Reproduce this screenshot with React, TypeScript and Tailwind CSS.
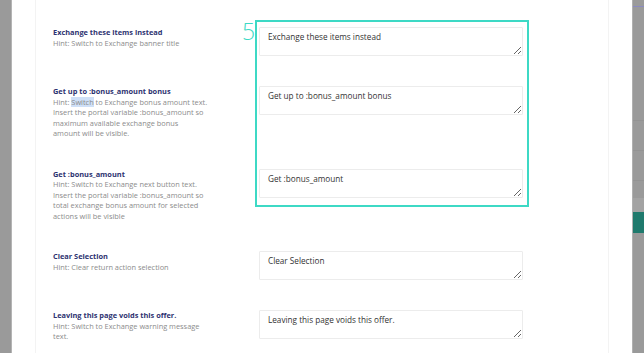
import React from 'react';

type Row = {
  title: string;
  hint: React.ReactNode[];
  value: string;
};

const rows: Row[] = [
  {
    title: 'Exchange these items instead',
    hint: ['Hint: Switch to Exchange banner title'],
    value: 'Exchange these items instead',
  },
  {
    title: 'Get up to :bonus_amount bonus',
    hint: [
      <>
        Hint: <span className="bg-[#cfe0f7]">Switch</span> to Exchange bonus amount text.
      </>,
      'Insert the portal variable :bonus_amount so',
      'maximum available exchange bonus',
      'amount will be visible.',
    ],
    value: 'Get up to :bonus_amount bonus',
  },
  {
    title: 'Get :bonus_amount',
    hint: [
      'Hint: Switch to Exchange next button text.',
      'Insert the portal variable :bonus_amount so',
      'total exchange bonus amount for selected',
      'actions will be visible',
    ],
    value: 'Get :bonus_amount',
  },
  {
    title: 'Clear Selection',
    hint: ['Hint: Clear return action selection'],
    value: 'Clear Selection',
  },
  {
    title: 'Leaving this page voids this offer.',
    hint: ['Hint: Switch to Exchange warning message', 'text.'],
    value: 'Leaving this page voids this offer.',
  },
];

function SettingRow({ row }: { row: Row }) {
  return (
    <div className="flex">
      <div className="w-[206px] shrink-0 text-[7.4px] leading-[10.5px]">
        <div className="font-bold text-[#2d3270] whitespace-nowrap">{row.title}</div>
        {row.hint.map((line, i) => (
          <div key={i} className="text-[#8c8c8c] whitespace-nowrap">
            {line}
          </div>
        ))}
      </div>
      <textarea
        readOnly
        defaultValue={row.value}
        className="w-[264px] h-[29px] border border-[#ececec] rounded-[1px] px-[8px] pt-[3px] text-[8.2px] leading-[11px] text-[#333] outline-none resize-y"
      />
    </div>
  );
}

export default function App() {
  return (
    <div className="w-[644px] h-[353px] flex overflow-hidden bg-[#9a9a9a] font-['Open_Sans',sans-serif]">
      <div className="w-[12px] shrink-0 border-r border-[#b4b4b4]" />
      <div className="w-[620px] shrink-0 bg-white px-[23px]">
        <div className="relative h-full border-x border-[#f3f3f3] pl-[17px] pt-[27px]">
          <div className="flex flex-col gap-[30px]">
            {rows.map((row, i) => (
              <SettingRow key={i} row={row} />
            ))}
          </div>
          <div className="absolute left-[219px] top-[20px] w-[274px] h-[187px] border-2 border-[#3dd9c5] pointer-events-none">
            <span className="absolute -left-[15px] -top-[2px] text-[23px] leading-none font-light text-[#3dd9c5]">5</span>
          </div>
        </div>
      </div>
      <div className="w-[12px] shrink-0 flex flex-col border-l border-[#b0b0b0]">
        <div className="h-[6px]" />
        <div className="h-px bg-[#8a8ac0]" />
        <div className="h-[113px]" />
        <div className="h-px bg-[#939393]" />
        <div className="h-[29px]" />
        <div className="h-px bg-[#939393]" />
        <div className="h-[29px]" />
        <div className="h-px bg-[#939393]" />
        <div className="h-[17px]" />
        <div className="h-[14px] bg-[#a3a3a3]" />
        <div className="h-[21px] bg-[#1f7a6d]" />
        <div className="flex-1" />
      </div>
    </div>
  );
}
